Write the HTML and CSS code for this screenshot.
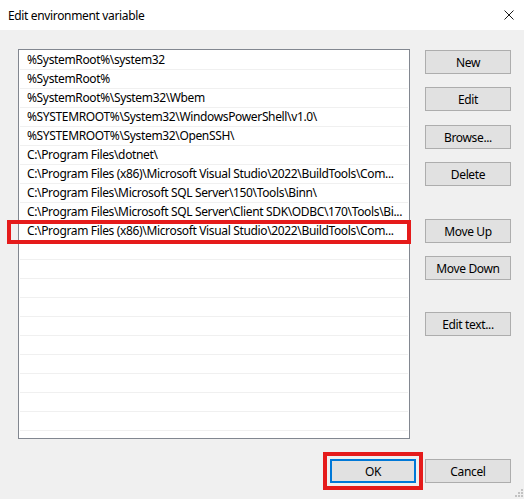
FILE: index.html
```html
<!DOCTYPE html>
<html>
<head>
<meta name="viewport" content="width=device-width, initial-scale=1">
<title>Edit environment variable</title>
<link rel="stylesheet" href="styles.css">
</head>
<body>
<div class="window">
  <div class="titlebar">
    <span class="title">Edit environment variable</span>
    <span class="close">
      <svg width="10" height="10" viewBox="0 0 10 10"><path d="M0.5 0.5 L9.5 9.5 M9.5 0.5 L0.5 9.5" stroke="#1a1a1a" stroke-width="1" fill="none"/></svg>
    </span>
  </div>

  <div class="main">
    <div class="list">
      <div class="row">%SystemRoot%\system32</div>
      <div class="row">%SystemRoot%</div>
      <div class="row">%SystemRoot%\System32\Wbem</div>
      <div class="row">%SYSTEMROOT%\System32\WindowsPowerShell\v1.0\</div>
      <div class="row">%SYSTEMROOT%\System32\OpenSSH\</div>
      <div class="row">C:\Program Files\dotnet\</div>
      <div class="row">C:\Program Files (x86)\Microsoft Visual Studio\2022\BuildTools\Com...</div>
      <div class="row">C:\Program Files\Microsoft SQL Server\150\Tools\Binn\</div>
      <div class="row">C:\Program Files\Microsoft SQL Server\Client SDK\ODBC\170\Tools\Bi...</div>
      <div class="row marked">C:\Program Files (x86)\Microsoft Visual Studio\2022\BuildTools\Com...</div>
      <div class="row"></div>
      <div class="row"></div>
      <div class="row"></div>
      <div class="row"></div>
      <div class="row"></div>
      <div class="row"></div>
      <div class="row"></div>
      <div class="row"></div>
      <div class="row"></div>
      <div class="row"></div>
    </div>

    <div class="side">
      <button class="btn">New</button>
      <button class="btn gap14">Edit</button>
      <button class="btn gap14">Browse...</button>
      <button class="btn">Delete</button>
      <button class="btn gap33">Move Up</button>
      <button class="btn">Move Down</button>
      <button class="btn gap32">Edit text...</button>
    </div>
  </div>

  <div class="footer">
    <button class="btn ok">OK</button>
    <button class="btn">Cancel</button>
  </div>

  <svg class="grip" width="9" height="9" viewBox="0 0 9 9">
    <rect x="7" y="1" width="2" height="2" fill="#c2c2c2"/>
    <rect x="4" y="4" width="2" height="2" fill="#c2c2c2"/>
    <rect x="7" y="4" width="2" height="2" fill="#c2c2c2"/>
    <rect x="1" y="7" width="2" height="2" fill="#c2c2c2"/>
    <rect x="4" y="7" width="2" height="2" fill="#c2c2c2"/>
    <rect x="7" y="7" width="2" height="2" fill="#c2c2c2"/>
  </svg>
</div>
</body>
</html>
```

FILE: styles.css
```css
* {
  box-sizing: border-box;
}

body {
  margin: 0;
  font-family: "Noto Sans", "Liberation Sans", sans-serif;
  font-size: 12px;
  letter-spacing: -0.35px;
  color: #000;
  background: #f0f0f0;
}

.window {
  position: relative;
  width: 524px;
  height: 499px;
  background: #f0f0f0;
}

.titlebar {
  height: 30px;
  background: #fff;
  display: flex;
  align-items: center;
  justify-content: space-between;
  padding: 0 10px 0 8px;
}

.close {
  display: flex;
}

.main {
  display: flex;
  padding: 19px 0 0 18px;
}

.list {
  width: 392px;
  height: 390px;
  background: #fff;
  border: 1px solid #828790;
  padding: 1px;
}

.row {
  position: relative;
  height: 19px;
  line-height: 18px;
  padding-left: 7px;
  border-bottom: 1px solid #f0f0f0;
  white-space: nowrap;
}

/* red frame drawn round the selected path */
.row.marked::after {
  content: "";
  position: absolute;
  left: -13px;
  right: -3px;
  top: -2px;
  bottom: -4px;
  border: 4px solid #e51b1b;
}

.side {
  display: flex;
  flex-direction: column;
  margin-left: 15px;
  padding-top: 1px;
}

.btn {
  width: 86px;
  height: 24px;
  margin: 13px 0 0 0;
  padding: 0;
  font-family: inherit;
  font-size: 12px;
  letter-spacing: inherit;
  color: #000;
  background: #e1e1e1;
  border: 1px solid #adadad;
  border-radius: 0;
}

.side .btn:first-child {
  margin-top: 0;
}

.side .btn:nth-child(3) {
  margin-top: 14px;
}

.side .gap33 {
  margin-top: 33px;
}

.side .gap32 {
  margin-top: 32px;
}

.footer {
  display: flex;
  justify-content: flex-end;
  gap: 9px;
  padding: 20px 13px 0 0;
}

.footer .btn {
  margin: 0;
}

.ok {
  border: 2px solid #0078d7;
  outline: 4px solid #e51b1b;
  outline-offset: 3px;
}

.grip {
  position: absolute;
  right: 1px;
  bottom: 2px;
}
```
